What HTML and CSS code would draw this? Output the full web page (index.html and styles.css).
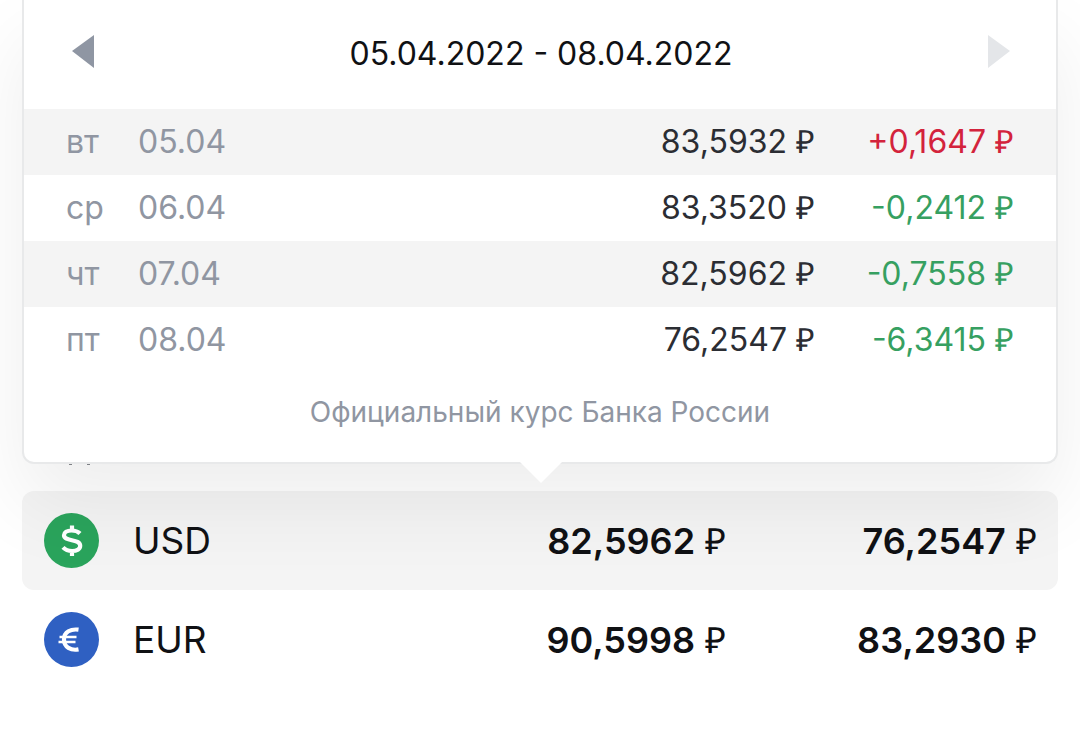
FILE: index.html
```
<!DOCTYPE html>
<html lang="ru">
<head>
    <meta charset="UTF-8">
    <meta name="viewport" content="width=device-width, initial-scale=1.0">
    <title>Курсы валют</title>
    <link rel="stylesheet" href="styles.css">
</head>
<body>
    <main class="page">
        <!-- Rate history popup -->
        <section class="popup">
            <div class="popup-header">
                <button type="button" class="arrow-btn" aria-label="Назад">
                    <svg width="22" height="38" viewBox="0 0 22 38"><path d="M22 0v33L0 16z" fill="#8f96a3"/></svg>
                </button>
                <h2 class="period">05.04.2022 - 08.04.2022</h2>
                <button type="button" class="arrow-btn" aria-label="Вперёд" disabled>
                    <svg width="22" height="38" viewBox="0 0 22 38"><path d="M0 0v33l22-17z" fill="#e4e6e9"/></svg>
                </button>
            </div>
            <table class="history">
                <tr>
                    <td class="day">вт</td>
                    <td class="date">05.04</td>
                    <td class="value">83,5932 <span class="rub">₽</span></td>
                    <td class="delta up">+0,1647 <span class="rub">₽</span></td>
                </tr>
                <tr>
                    <td class="day">ср</td>
                    <td class="date">06.04</td>
                    <td class="value">83,3520 <span class="rub">₽</span></td>
                    <td class="delta down">-0,2412 <span class="rub">₽</span></td>
                </tr>
                <tr>
                    <td class="day">чт</td>
                    <td class="date">07.04</td>
                    <td class="value">82,5962 <span class="rub">₽</span></td>
                    <td class="delta down">-0,7558 <span class="rub">₽</span></td>
                </tr>
                <tr>
                    <td class="day">пт</td>
                    <td class="date">08.04</td>
                    <td class="value">76,2547 <span class="rub">₽</span></td>
                    <td class="delta down">-6,3415 <span class="rub">₽</span></td>
                </tr>
            </table>
            <p class="source">Официальный курс Банка России</p>
        </section>

        <!-- Bottom edge of the covered row -->
        <div class="covered">
            <svg width="24" height="1" viewBox="0 0 24 1"><path d="M1 0h3v1H1zM19 0h3v1h-3z" fill="#85888d"/></svg>
        </div>

        <!-- Current rates -->
        <table class="rates">
            <tr class="selected">
                <th scope="row">
                    <div class="currency">
                        <svg class="coin" viewBox="0 0 55 55">
                            <circle cx="27.500" cy="27.500" r="27.500" fill="#2aa45c"/>
                            <path d="M36 20.500C34 18.500 31 17.500 27.500 17.500c-4.500 0-7.500 2-7.500 4.800 0 6.700 16.200 3.200 16.200 10.500 0 3.200-3.400 5.200-8 5.200-3.900 0-7.200-1.400-9.200-3.600M28 12.500v5M28 38v5" fill="none" stroke="#fff" stroke-width="4.200"/>
                        </svg>
                        USD
                    </div>
                </th>
                <td><b>82,5962</b> <span class="rub">₽</span></td>
                <td><b>76,2547</b> <span class="rub">₽</span></td>
            </tr>
            <tr>
                <th scope="row">
                    <div class="currency">
                        <svg class="coin" viewBox="0 0 55 55">
                            <circle cx="27.500" cy="27.500" r="27.500" fill="#2f60c2"/>
                            <path d="M34.500 17.700c-7.500-1-14.500 2-14.500 9.800s7 11.300 14.500 9.900" fill="none" stroke="#fff" stroke-width="4.200"/>
                            <path d="M15.500 25H32.500M14.500 30H31.500" stroke="#fff" stroke-width="2.400"/>
                        </svg>
                        EUR
                    </div>
                </th>
                <td><b>90,5998</b> <span class="rub">₽</span></td>
                <td><b>83,2930</b> <span class="rub">₽</span></td>
            </tr>
        </table>
    </main>
</body>
</html>
```
FILE: styles.css
```
* {
    box-sizing: border-box;
}

body {
    margin: 0;
    background: #fff;
    color: #101114;
    font-family: Inter, "Liberation Sans", sans-serif;
}

.page {
    padding: 0 22px;
}

table {
    width: 100%;
    border-collapse: separate;
    border-spacing: 0;
    table-layout: fixed;
}

th,
td {
    padding: 0;
    font-weight: 400;
    white-space: nowrap;
}

.rub {
    font-family: "Liberation Sans", sans-serif;
}

/* Popup */
.popup {
    position: relative;
    background: #fff;
    border: 2px solid #e8e9ea;
    border-top: none;
    border-radius: 0 0 12px 12px;
    box-shadow: 0 40px 80px rgba(0, 0, 0, 0.07);
}

/* Pointer under the popup */
.popup::after {
    content: "";
    position: absolute;
    top: 100%;
    left: 50%;
    margin-left: -20px;
    border: 21px solid transparent;
    border-top-color: #fff;
    border-bottom: none;
}

.popup-header {
    display: flex;
    align-items: center;
    justify-content: space-between;
    height: 109px;
    padding: 0 46px 2px 48px;
}

.arrow-btn {
    display: flex;
    padding: 0;
    border: none;
    background: none;
    cursor: pointer;
}

.period {
    margin: 0;
    font-size: 32px;
    font-weight: 400;
}

.history {
    font-size: 32px;
    line-height: 66px;
}

.history tr {
    height: 66px;
}

.history tr:nth-child(odd) {
    background: #f4f4f4;
}

.day,
.date {
    color: #9096a2;
}

.day {
    width: 114px;
    padding-left: 42px;
}

.value {
    color: #2b2d33;
    text-align: right;
}

.delta {
    width: 241px;
    padding-right: 42px;
    text-align: right;
}

.up {
    color: #d3233c;
}

.down {
    color: #36a061;
}

.source {
    margin: 0;
    padding: 19px 0 30px;
    color: #9096a2;
    font-size: 28px;
    line-height: 40px;
    text-align: center;
}

.covered {
    display: flex;
    height: 27px;
    padding-left: 46px;
}

/* Rates */
.rates {
    font-size: 37px;
}

.rates tr {
    height: 99px;
}

.rates td {
    width: 30%;
    padding-right: 21px;
    font-size: 36px;
    text-align: right;
}

.rates b {
    font-weight: 600;
}

.selected th,
.selected td {
    background: #f4f4f4;
}

.selected th {
    border-radius: 12px 0 0 12px;
}

.selected td:last-child {
    border-radius: 0 12px 12px 0;
}

.currency {
    display: flex;
    align-items: center;
    gap: 34px;
    padding-left: 22px;
}

.coin {
    width: 55px;
    height: 55px;
}
```
